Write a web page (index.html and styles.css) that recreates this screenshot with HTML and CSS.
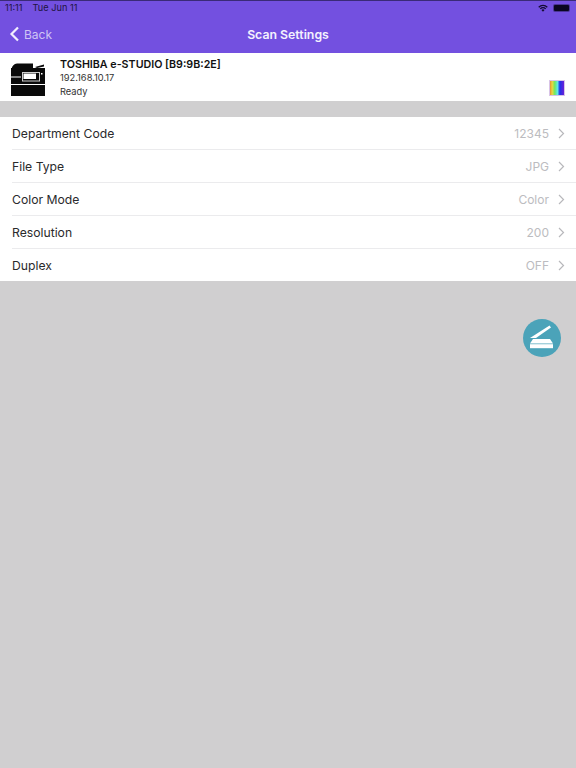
FILE: index.html
```
<!DOCTYPE html>
<html lang="en">
<head>
<meta charset="utf-8">
<title>Scan Settings</title>
<link rel="stylesheet" href="styles.css">
</head>
<body>
<header class="top">
  <div class="status">
    <span class="status-left"><span>11:11</span><span>Tue Jun 11</span></span>
    <span class="status-right">
      <svg class="wifi" viewBox="0 0 12 9"><path d="M0.3 3 A8 8 0 0 1 11.7 3 L10.6 4.2 A6.4 6.4 0 0 0 1.4 4.2 Z M2.2 5 A5.4 5.4 0 0 1 9.8 5 L8.7 6.1 A3.8 3.8 0 0 0 3.3 6.1 Z M4.1 7 A2.7 2.7 0 0 1 7.9 7 L6 9 Z"/></svg>
      <span class="battery"><span class="battery-fill"></span></span>
    </span>
  </div>
  <nav class="nav">
    <a class="back">
      <svg class="back-icon" viewBox="0 0 11 16"><path d="M9 1.5 L2.5 8 L9 14.5"/></svg>
      <span>Back</span>
    </a>
    <h1 class="title">Scan Settings</h1>
  </nav>
</header>
<section class="device">
  <svg class="printer" viewBox="0 0 34 33">
    <path d="M0.5 6 Q1.5 1 6 0.5 H22 V5 H0.5 Z"/>
    <path d="M24 4 L33 1.5 V3.5 L26 5 Z"/>
    <rect x="0" y="5" width="34" height="28"/>
    <path class="printer-gap" d="M0 14 H10 M0 21.5 H34"/>
    <rect class="printer-frame" x="11.5" y="9.5" width="17" height="8.5"/>
    <rect class="printer-window" x="12.5" y="10.5" width="12.5" height="5.5"/>
    <rect class="printer-window" x="30" y="10" width="1.5" height="1.5"/>
  </svg>
  <div class="device-info">
    <div class="device-name">TOSHIBA e-STUDIO [B9:9B:2E]</div>
    <div class="device-line">192.168.10.17</div>
    <div class="device-line">Ready</div>
  </div>
  <div class="color-bar"></div>
</section>
<ul class="settings">
  <li class="row"><span class="label">Department Code</span><span class="value">12345</span><svg class="chev" viewBox="0 0 7 11"><path d="M1 1 L5.5 5.5 L1 10"/></svg></li>
  <li class="row"><span class="label">File Type</span><span class="value">JPG</span><svg class="chev" viewBox="0 0 7 11"><path d="M1 1 L5.5 5.5 L1 10"/></svg></li>
  <li class="row"><span class="label">Color Mode</span><span class="value">Color</span><svg class="chev" viewBox="0 0 7 11"><path d="M1 1 L5.5 5.5 L1 10"/></svg></li>
  <li class="row"><span class="label">Resolution</span><span class="value">200</span><svg class="chev" viewBox="0 0 7 11"><path d="M1 1 L5.5 5.5 L1 10"/></svg></li>
  <li class="row"><span class="label">Duplex</span><span class="value">OFF</span><svg class="chev" viewBox="0 0 7 11"><path d="M1 1 L5.5 5.5 L1 10"/></svg></li>
</ul>
<div class="fab-wrap">
  <button class="fab" aria-label="Scan">
    <svg viewBox="0 0 38 38"><path d="M7 19 L26.5 6.5 L28 8.5 L13 19 Z"/><path d="M10 20 H27 L30 24.6 H7 Z"/><rect x="7" y="25.2" width="23" height="4"/></svg>
  </button>
</div>
</body>
</html>
```
FILE: styles.css
```
* { box-sizing: border-box; }
html, body { margin: 0; height: 100%; }
body {
  background: #d0cfd0;
  font-family: Inter, "Liberation Sans", sans-serif;
  overflow: hidden;
}
.top {
  height: 53px;
  background: #7350e0;
  border-top: 1px solid #3a2a78;
  color: #fff;
}
.status {
  height: 13px;
  display: flex;
  justify-content: space-between;
  align-items: center;
  padding: 0 6px 0 5px;
  font-size: 9.2px;
  color: #1e1440;
}
.status-left { display: flex; gap: 10px; }
.status-right { display: flex; align-items: center; gap: 5px; }
.wifi { width: 10px; height: 8px; fill: #120a30; }
.battery {
  width: 17px;
  height: 8px;
  border-radius: 2px;
  background: #4a3596;
  padding: 1px;
  display: block;
}
.battery-fill { display: block; height: 100%; background: #0a0620; border-radius: 1px; }
.nav {
  height: 39px;
  padding-top: 1px;
  position: relative;
  display: flex;
  align-items: center;
  justify-content: center;
}
.back {
  position: absolute;
  left: 9px;
  top: 12px;
  display: flex;
  align-items: center;
  gap: 4px;
  font-size: 12px;
  color: #cfc4f5;
}
.back-icon { width: 11px; height: 16px; fill: none; stroke: #f2eefe; stroke-width: 2.2; }
.title { margin: 0; font-size: 12.3px; font-weight: 600; color: #f4f1fe; }
.device {
  height: 48px;
  background: #fff;
  display: flex;
  align-items: flex-start;
  padding: 5px 11px 0 11px;
}
.printer { width: 34px; height: 33px; margin-top: 5px; fill: #0a0a0a; flex: none; }
.printer-gap { stroke: #fff; stroke-width: 1; fill: none; }
.printer-frame { fill: none; stroke: #cfcfcf; stroke-width: 1; }
.printer-window { fill: #fff; }
.device-info { margin-left: 15px; flex: 1; }
.device-name { font-size: 10.7px; font-weight: 600; line-height: 13px; color: #111; }
.device-line { font-size: 9.3px; line-height: 14px; color: #333; }
.device-line:first-of-type { margin-top: 2px; }
.color-bar {
  align-self: flex-end;
  width: 16px;
  height: 16px;
  margin-bottom: 5px;
  border: 1px solid #d8c4e8;
  background: linear-gradient(90deg, #e89030 0%, #e8d840 16%, #70e860 34%, #60e8e8 54%, #2030e8 70%, #6a20d8 100%);
}
.settings {
  list-style: none;
  margin: 16px 0 0;
  padding: 0;
  background: #fff;
}
.row {
  height: 33px;
  margin-left: 12px;
  padding-right: 11px;
  display: flex;
  align-items: center;
  border-bottom: 1px solid #ebebed;
  font-size: 12.2px;
  color: #2a2a2c;
}
.row:last-child { height: 32px; border-bottom: 0; }
.label { flex: 1; }
.value { color: #bcbcc0; font-size: 12px; }
.chev { width: 7px; height: 11px; margin-left: 9px; fill: none; stroke: #b8b8bc; stroke-width: 1.2; }
.fab-wrap { display: flex; justify-content: flex-end; padding: 38px 15px 0 0; }
.fab {
  width: 38px;
  height: 38px;
  padding: 0;
  border: 0;
  border-radius: 50%;
  background: #4ba3b9;
}
.fab svg { display: block; width: 38px; height: 38px; fill: #fff; }
```
